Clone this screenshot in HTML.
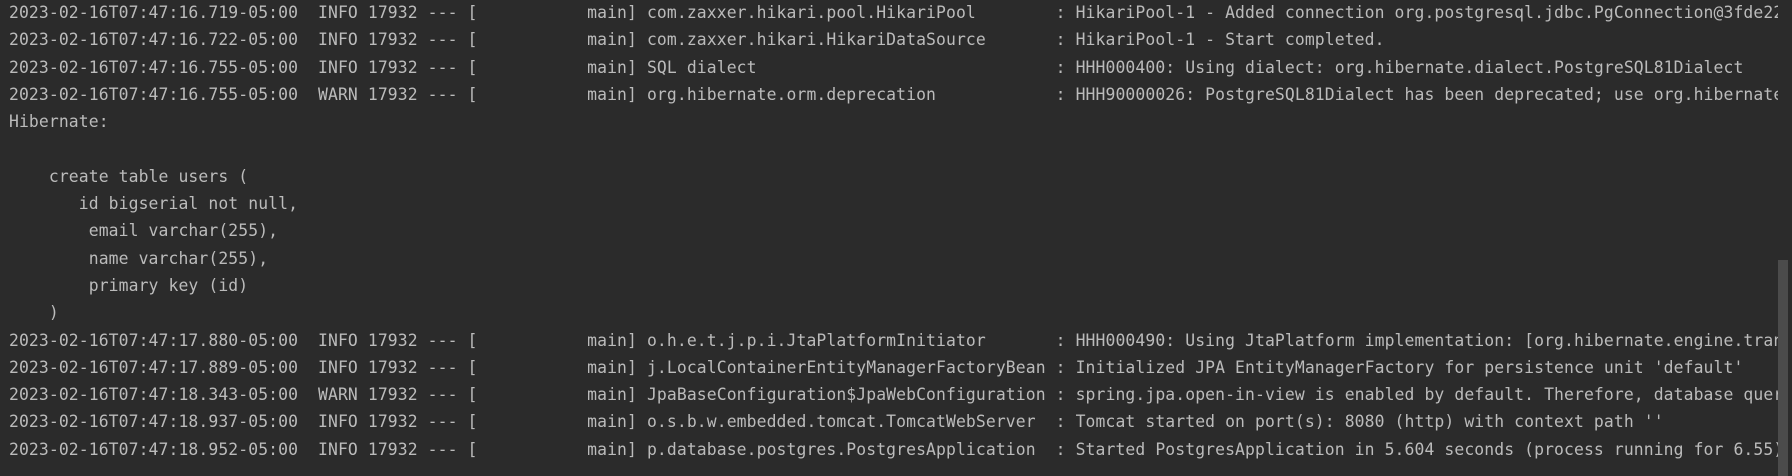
<!DOCTYPE html>
<html><head><meta charset="utf-8"><style>
html,body{margin:0;padding:0;background:#2b2b2b;width:1792px;height:476px;overflow:hidden}
pre{position:absolute;left:9px;top:-1px;margin:0;font-family:"DejaVu Sans Mono","Liberation Mono",monospace;font-size:16.4px;letter-spacing:0.1px;line-height:27.3px;color:#bbbbbb;width:1769px;overflow:hidden;white-space:pre}
.sb{position:absolute;left:1778px;top:260px;width:10px;height:216px;background:#4b4b4b}
</style></head><body>
<pre>2023-02-16T07:47:16.719-05:00  INFO 17932 --- [           main] com.zaxxer.hikari.pool.HikariPool        : HikariPool-1 - Added connection org.postgresql.jdbc.PgConnection@3fde22
2023-02-16T07:47:16.722-05:00  INFO 17932 --- [           main] com.zaxxer.hikari.HikariDataSource       : HikariPool-1 - Start completed.
2023-02-16T07:47:16.755-05:00  INFO 17932 --- [           main] SQL dialect                              : HHH000400: Using dialect: org.hibernate.dialect.PostgreSQL81Dialect
2023-02-16T07:47:16.755-05:00  WARN 17932 --- [           main] org.hibernate.orm.deprecation            : HHH90000026: PostgreSQL81Dialect has been deprecated; use org.hibernate
Hibernate: 

    create table users (
       id bigserial not null,
        email varchar(255),
        name varchar(255),
        primary key (id)
    )
2023-02-16T07:47:17.880-05:00  INFO 17932 --- [           main] o.h.e.t.j.p.i.JtaPlatformInitiator       : HHH000490: Using JtaPlatform implementation: [org.hibernate.engine.tran
2023-02-16T07:47:17.889-05:00  INFO 17932 --- [           main] j.LocalContainerEntityManagerFactoryBean : Initialized JPA EntityManagerFactory for persistence unit 'default'
2023-02-16T07:47:18.343-05:00  WARN 17932 --- [           main] JpaBaseConfiguration$JpaWebConfiguration : spring.jpa.open-in-view is enabled by default. Therefore, database quer
2023-02-16T07:47:18.937-05:00  INFO 17932 --- [           main] o.s.b.w.embedded.tomcat.TomcatWebServer  : Tomcat started on port(s): 8080 (http) with context path ''
2023-02-16T07:47:18.952-05:00  INFO 17932 --- [           main] p.database.postgres.PostgresApplication  : Started PostgresApplication in 5.604 seconds (process running for 6.55)</pre>
<div class="sb"></div>
</body></html>
